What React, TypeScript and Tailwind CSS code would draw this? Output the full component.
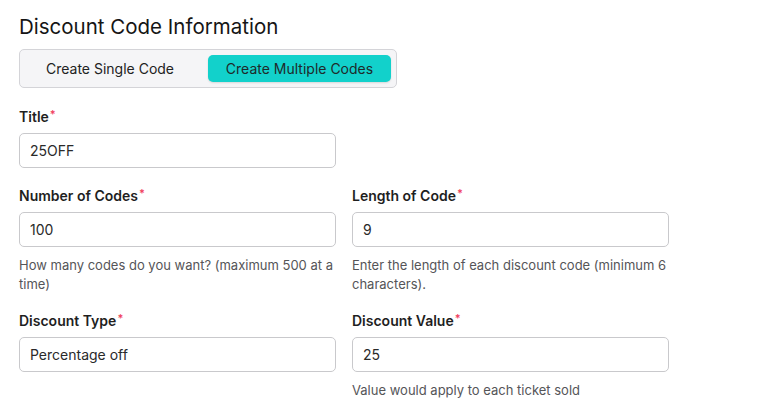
import React from "react";

function Label({ children }: { children: React.ReactNode }) {
  return (
    <div className="text-[14px] leading-[20px] font-semibold text-[#1f1f1f]">
      {children}
      <span className="text-[#f0435f] text-[11px] align-top relative -top-[3px] ml-[1px]">*</span>
    </div>
  );
}

function Input({ value }: { value: string }) {
  return (
    <div className="mt-[6px] h-[35px] w-full rounded-[5px] border border-[#c9c9cc] bg-white px-[10px] flex items-center text-[14px] text-[#2a2a2a]">
      {value}
    </div>
  );
}

function Help({ children }: { children: React.ReactNode }) {
  return <div className="mt-[9px] text-[13px] leading-[19px] text-[#555558]">{children}</div>;
}

export default function App() {
  return (
    <div
      className="w-[767px] h-[408px] bg-white px-[19px] pt-[13px] overflow-hidden"
      style={{ fontFamily: "Inter, 'Noto Sans', sans-serif" }}
    >
      <h1 className="text-[20.5px] leading-[28px] font-normal text-[#151515]">Discount Code Information</h1>
      <div className="mt-[8px] w-[378px] h-[39px] rounded-[5px] border border-[#d4d4d8] bg-[#f5f5f7] p-[5px] flex">
        <div className="w-[170px] flex items-center justify-center text-[14px] text-[#222]">Create Single Code</div>
        <div className="ml-auto w-[183px] flex items-center justify-center rounded-[5px] bg-[#12d1cb] text-[14px] text-[#1f2a2a] shadow-[0_1px_2px_rgba(0,0,0,0.12)]">
          Create Multiple Codes
        </div>
      </div>

      <div className="mt-[19px] w-[317px]">
        <Label>Title</Label>
        <Input value="25OFF" />
      </div>

      <div className="mt-[18px] grid grid-cols-[317px_317px] gap-x-[16px]">
        <div>
          <Label>Number of Codes</Label>
          <Input value="100" />
          <Help>How many codes do you want? (maximum 500 at a time)</Help>
        </div>
        <div>
          <Label>Length of Code</Label>
          <Input value="9" />
          <Help>Enter the length of each discount code (minimum 6 characters).</Help>
        </div>
      </div>

      <div className="mt-[17px] grid grid-cols-[317px_317px] gap-x-[16px]">
        <div>
          <Label>Discount Type</Label>
          <Input value="Percentage off" />
        </div>
        <div>
          <Label>Discount Value</Label>
          <Input value="25" />
          <Help>Value would apply to each ticket sold</Help>
        </div>
      </div>
    </div>
  );
}
